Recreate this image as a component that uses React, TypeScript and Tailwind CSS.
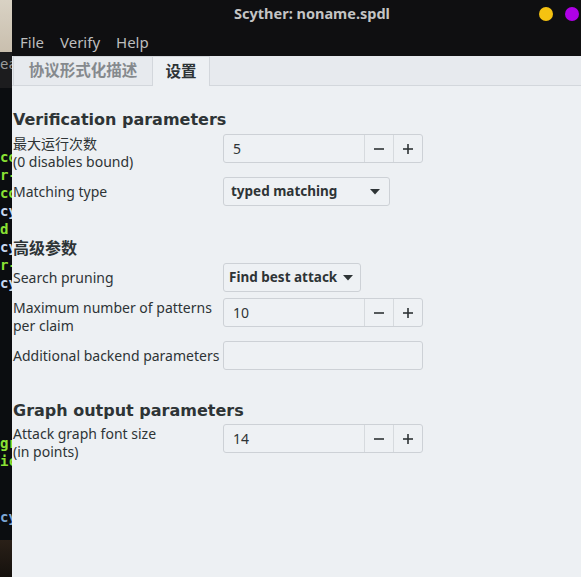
import React from "react";

const sans = { fontFamily: '"Noto Sans", "Noto Sans CJK SC", sans-serif' };
const heading = { fontFamily: '"DejaVu Sans", "Noto Sans CJK SC", sans-serif' };

function SpinBox({ value }: { value: string }) {
  return (
    <div className="flex h-[29px] w-[200px] rounded-[3px] border border-[#cdd1d6] bg-[#eef1f4]">
      <div className="flex flex-1 items-center pl-[9px] text-[14px] text-[#2e3436]">{value}</div>
      <div className="flex w-[29px] items-center justify-center border-l border-[#d6dade]">
        <svg width="12" height="12" viewBox="0 0 12 12"><rect x="1" y="5.2" width="10" height="1.6" fill="#2e3436" /></svg>
      </div>
      <div className="flex w-[29px] items-center justify-center border-l border-[#d6dade]">
        <svg width="12" height="12" viewBox="0 0 12 12"><rect x="1" y="5.2" width="10" height="1.6" fill="#2e3436" /><rect x="5.2" y="1" width="1.6" height="10" fill="#2e3436" /></svg>
      </div>
    </div>
  );
}

function Row({ label, children }: { label: React.ReactNode; children: React.ReactNode }) {
  return (
    <div className="flex items-start">
      <div className="flex min-h-[29px] w-[210px] items-center leading-[18px] text-[14px] text-[#2e3436]">
        <div className="pt-[1px]">{label}</div>
      </div>
      {children}
    </div>
  );
}

function Heading({ children }: { children: React.ReactNode }) {
  return <div className="h-[22px] pt-[2px] leading-[22px] text-[16px] font-bold text-[#2e3436]" style={heading}>{children}</div>;
}

function Strip() {
  const green = "text-[#8ae234]";
  const blue = "text-[#c8d8f0]";
  return (
    <div className="flex w-[12px] shrink-0 flex-col overflow-hidden bg-[#0b0d10] font-bold text-[14px] leading-[18px]" style={{ fontFamily: '"DejaVu Sans Mono", monospace' }}>
      <div className="h-[52px] shrink-0 bg-gradient-to-b from-[#d9d2c4] to-[#c9bfae]" />
      <div className="h-[36px] shrink-0 bg-[#1c1c1e] pt-[3px] font-normal text-[#9a9a9a]">ea</div>
      <div className="h-[60px] shrink-0" />
      <div className={green}>co</div>
      <div className={green}>r-</div>
      <div className={green}>co</div>
      <div className={blue}>cy</div>
      <div className={green}>d</div>
      <div className={blue}>cy</div>
      <div className={green}>r-</div>
      <div className={blue}>cy</div>
      <div className="h-[142px] shrink-0" />
      <div className={green}>gr</div>
      <div className={green}>ic</div>
      <div className="h-[38px] shrink-0" />
      <div className="text-[#7fa8d8]">cy</div>
      <div className="h-[14px] shrink-0" />
      <div className="flex-1 bg-gradient-to-b from-[#2a2018] to-[#15110d]" />
    </div>
  );
}

export default function App() {
  return (
    <div className="flex h-[577px] w-[581px] overflow-hidden" style={sans}>
      <Strip />
      <div className="flex w-[600px] shrink-0 flex-col bg-[#edf0f3]">
        <div className="bg-[#0f0f11]">
          <div className="relative flex h-[28px] items-center justify-center">
            <span className="text-[14.5px] font-bold text-[#c4c4c4]">Scyther: noname.spdl</span>
            <div className="absolute right-[33px] top-[7px] flex gap-[12px]">
              <span className="h-[14px] w-[14px] rounded-full bg-[#f5c211]" />
              <span className="h-[14px] w-[14px] rounded-full bg-[#b000e8]" />
            </div>
          </div>
          <div className="flex h-[28px] items-center gap-[16px] pl-[8px] text-[15px] text-[#bdbdbd]">
            <span>File</span>
            <span>Verify</span>
            <span>Help</span>
          </div>
        </div>
        <div className="flex h-[30px] items-end border-b border-[#d3d7dc] bg-[#e7eaee] pl-[1px]">
          <div className="flex h-[29px] w-[140px] items-center justify-center border-l border-r border-t border-[#d3d7dc] text-[15.5px] font-bold text-[#85898d]">
            协议形式化描述
          </div>
          <div className="-mb-[1px] flex h-[30px] w-[57px] items-center justify-center border-r border-t border-[#d3d7dc] bg-[#edf0f3] text-[15.5px] font-bold text-[#2e3436]">
            设置
          </div>
        </div>
        <div className="flex flex-col pl-[1px] pt-[21px]">
          <Heading>Verification parameters</Heading>
          <div className="mt-[5px] flex flex-col gap-[6px]">
            <Row label={<>最大运行次数<br />(0 disables bound)</>}>
              <SpinBox value="5" />
            </Row>
            <Row label="Matching type">
              <div className="flex h-[29px] w-[167px] items-center rounded-[3px] border border-[#cdd1d6] bg-[#eef1f4] pl-[7px] pr-[9px] text-[13.5px] font-bold text-[#2e3436]">
                <span className="flex-1">typed matching</span>
                <svg width="10" height="6" viewBox="0 0 10 6"><polygon points="0,0 10,0 5,5.5" fill="#2e3436" /></svg>
              </div>
            </Row>
          </div>
          <div className="mt-[30px]">
            <Heading>高级参数</Heading>
          </div>
          <div className="mt-[5px] flex flex-col gap-[6px]">
            <Row label="Search pruning">
              <div className="flex h-[29px] w-[138px] items-center rounded-[3px] border border-[#cdd1d6] bg-[#eef1f4] pl-[5px] text-[13.5px] font-bold text-[#2e3436]">
                <span>Find best attack</span>
                <svg className="ml-[6px]" width="10" height="6" viewBox="0 0 10 6"><polygon points="0,0 10,0 5,5.5" fill="#2e3436" /></svg>
              </div>
            </Row>
            <Row label={<>Maximum number of patterns<br />per claim</>}>
              <SpinBox value="10" />
            </Row>
            <Row label="Additional backend parameters">
              <div className="h-[29px] w-[200px] rounded-[3px] border border-[#cdd1d6] bg-[#eef1f4]" />
            </Row>
          </div>
          <div className="mt-[28px]">
            <Heading>Graph output parameters</Heading>
          </div>
          <div className="mt-[4px] flex flex-col gap-[6px]">
            <Row label={<>Attack graph font size<br />(in points)</>}>
              <SpinBox value="14" />
            </Row>
          </div>
        </div>
      </div>
    </div>
  );
}
